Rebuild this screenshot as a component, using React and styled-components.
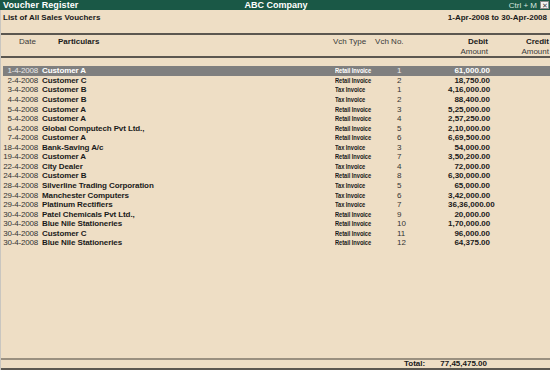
import styled, { createGlobalStyle } from "styled-components";

const Global = createGlobalStyle`
  html, body {
    margin: 0;
    padding: 0;
    background: #eedec5;
  }
  * {
    box-sizing: border-box;
  }
`;

const Screen = styled.div`
  background: #eedec5;
  display: flex;
  flex-direction: column;
  font-family: "Liberation Sans", Arial, sans-serif;
  height: 370px;
  overflow: hidden;
  width: 550px;
`;
const TitleBar = styled.div`
  align-items: center;
  background: #1a5846;
  color: #fff;
  display: grid;
  font-size: 9px;
  grid-template-columns: 1fr auto 1fr;
  height: 10px;
  padding: 0 1px 0 3px;
`;
const TitleLeft = styled.span`
  font-weight: 700;
  letter-spacing: 0.1px;
`;
const TitleCenter = styled.span`
  font-weight: 700;
`;
const TitleRight = styled.div`
  align-items: center;
  display: flex;
  gap: 3px;
  justify-content: flex-end;
`;
const Shortcut = styled.span`
  color: #d8e4de;
  font-size: 8px;
`;
const CloseBox = styled.span`
  align-items: center;
  background: #f2f2f2;
  border: 1px solid #8a8a8a;
  color: #444;
  display: flex;
  font-size: 7px;
  height: 8px;
  justify-content: center;
  line-height: 1;
  width: 9px;
`;
const Frame = styled.div`
  border-left: 1px solid #c9c6c0;
  display: flex;
  flex: 1;
  flex-direction: column;
`;
const SubHeader = styled.div`
  align-items: center;
  border-bottom: 2px solid #5b5750;
  color: #1a1a1a;
  display: flex;
  font-size: 8px;
  font-weight: 700;
  height: 25px;
  justify-content: space-between;
  padding: 0 3px 8px 2px;
`;
const ColGrid = styled.div`
  column-gap: 0;
  display: grid;
  grid-template-columns: 35px 297px 43px 70px 42px 61px;
`;
const HeadRow = styled(ColGrid)`
  border-bottom: 2px solid #5b5750;
  color: #3a3a3a;
  font-size: 8px;
  grid-template-rows: 10px 9px;
  padding-top: 2px;
`;
const HeadCell = styled.span`
  color: ${(p) => (p.$bold ? "#1a1a1a" : "#3a3a3a")};
  font-weight: ${(p) => (p.$bold ? 700 : 400)};
  grid-column: ${(p) => p.$col};
  grid-row: ${(p) => p.$row || 1};
  padding-left: ${(p) => p.$indent || 0}px;
  text-align: ${(p) => (p.$right ? "right" : "left")};
  white-space: nowrap;
`;
const Body = styled.div`
  display: flex;
  flex: 1;
  flex-direction: column;
  padding-top: 8px;
`;
const Row = styled(ColGrid)`
  align-items: center;
  background: ${(p) => (p.$active ? "#7f7f7f" : "transparent")};
  color: ${(p) => (p.$active ? "#fff" : "#1a1a1a")};
  font-size: 8px;
  height: 9.57px;
  line-height: 9px;
  margin-left: 2px;
`;
const DateCell = styled.span`
  color: ${(p) => (p.$active ? "#e8e8e8" : "#333")};
  letter-spacing: -0.2px;
  margin-left: -2px;
  text-align: right;
`;
const NameCell = styled.span`
  font-weight: 700;
  letter-spacing: -0.1px;
  padding-left: 4px;
  white-space: nowrap;
`;
const TypeCell = styled.span`
  display: inline-block;
  font-size: 8px;
  font-weight: 700;
  letter-spacing: -0.1px;
  transform: scaleX(0.72);
  transform-origin: left center;
  white-space: nowrap;
`;
const NoCell = styled.span`
  color: ${(p) => (p.$active ? "#eee" : "#333")};
  padding-left: 19px;
`;
const AmountCell = styled.span`
  font-weight: 700;
  text-align: right;
`;
const Footer = styled.div`
  align-items: center;
  border-bottom: 2px solid #5b5750;
  border-top: 2px solid #9a9080;
  color: #1a1a1a;
  display: grid;
  font-size: 8px;
  font-weight: 700;
  grid-template-columns: 403px 36px 47px;
  height: 12px;
  line-height: 8px;
`;
const TotalLabel = styled.span`
  grid-column: 2;
`;
const TotalValue = styled.span`
  grid-column: 3;
  text-align: right;
`;

const vouchers = [
  ["1-4-2008", "Customer A", "Retail Invoice", 1, "61,000.00"],
  ["2-4-2008", "Customer C", "Retail Invoice", 2, "18,750.00"],
  ["3-4-2008", "Customer B", "Tax Invoice", 1, "4,16,000.00"],
  ["4-4-2008", "Customer B", "Tax Invoice", 2, "88,400.00"],
  ["5-4-2008", "Customer A", "Retail Invoice", 3, "5,25,000.00"],
  ["5-4-2008", "Customer A", "Retail Invoice", 4, "2,57,250.00"],
  ["6-4-2008", "Global Computech Pvt Ltd.,", "Retail Invoice", 5, "2,10,000.00"],
  ["7-4-2008", "Customer A", "Retail Invoice", 6, "6,69,500.00"],
  ["18-4-2008", "Bank-Saving A/c", "Tax Invoice", 3, "54,000.00"],
  ["19-4-2008", "Customer A", "Retail Invoice", 7, "3,50,200.00"],
  ["22-4-2008", "City Dealer", "Tax Invoice", 4, "72,000.00"],
  ["24-4-2008", "Customer B", "Retail Invoice", 8, "6,30,000.00"],
  ["28-4-2008", "Silverline Trading Corporation", "Tax Invoice", 5, "65,000.00"],
  ["29-4-2008", "Manchester Computers", "Tax Invoice", 6, "3,42,000.00"],
  ["29-4-2008", "Platinum Rectifiers", "Tax Invoice", 7, "36,36,000.00"],
  ["30-4-2008", "Patel Chemicals Pvt Ltd.,", "Retail Invoice", 9, "20,000.00"],
  ["30-4-2008", "Blue Nile Stationeries", "Retail Invoice", 10, "1,70,000.00"],
  ["30-4-2008", "Customer C", "Retail Invoice", 11, "96,000.00"],
  ["30-4-2008", "Blue Nile Stationeries", "Retail Invoice", 12, "64,375.00"],
];

function App() {
  return (
    <Screen>
      <Global />
      <TitleBar>
        <TitleLeft>Voucher Register</TitleLeft>
        <TitleCenter>ABC Company</TitleCenter>
        <TitleRight>
          <Shortcut>Ctrl + M</Shortcut>
          <CloseBox>✕</CloseBox>
        </TitleRight>
      </TitleBar>
      <Frame>
        <SubHeader>
          <span>List of All Sales Vouchers</span>
          <span>1-Apr-2008 to 30-Apr-2008</span>
        </SubHeader>
        <HeadRow>
          <HeadCell $col={1} $right>Date</HeadCell>
          <HeadCell $col={2} $bold $indent={22}>Particulars</HeadCell>
          <HeadCell $col="3 / 5">
            Vch Type&nbsp;&nbsp;&nbsp;&nbsp;Vch No.
          </HeadCell>
          <HeadCell $col={5} $bold $right>Debit</HeadCell>
          <HeadCell $col={5} $row={2} $right>Amount</HeadCell>
          <HeadCell $col={6} $bold $right>Credit</HeadCell>
          <HeadCell $col={6} $row={2} $right>Amount</HeadCell>
        </HeadRow>
        <Body>
          {vouchers.map(([date, name, type, no, amt], i) => (
            <Row key={i} $active={i === 0}>
              <DateCell $active={i === 0}>{date}</DateCell>
              <NameCell>{name}</NameCell>
              <span>
                <TypeCell>{type}</TypeCell>
              </span>
              <NoCell $active={i === 0}>{no}</NoCell>
              <AmountCell>{amt}</AmountCell>
              <span />
            </Row>
          ))}
        </Body>
        <Footer>
          <TotalLabel>Total:</TotalLabel>
          <TotalValue>77,45,475.00</TotalValue>
        </Footer>
      </Frame>
    </Screen>
  );
}

export default App;
